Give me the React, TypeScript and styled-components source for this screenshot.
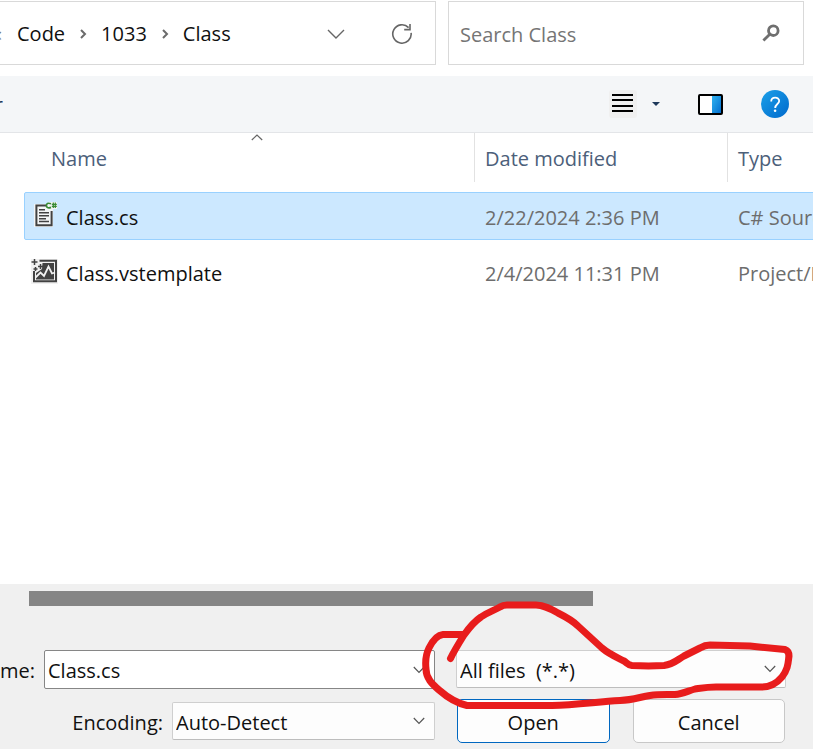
import React from "react";
import styled, { createGlobalStyle } from "styled-components";

const GlobalStyle = createGlobalStyle`
  * { box-sizing: border-box; }
  body { margin: 0; background: #fff; }
  body, button, input, select {
    font-family: "Open Sans", "Noto Sans", sans-serif;
    font-size: 20px;
    line-height: 28px;
    color: #101010;
  }
`;

const Dialog = styled.main`
  display: flex;
  flex-direction: column;
  min-height: 100vh;
  overflow: hidden;
`;

const TopBar = styled.header`
  display: grid;
  grid-template-columns: minmax(0, 436fr) minmax(0, 356fr);
  gap: 12px;
  padding: 1px 9px 11px 0;
`;

const AddressBar = styled.nav`
  display: flex;
  align-items: center;
  height: 64px;
  border: 1px solid #d9d9d9;
  border-left: 0;
  padding: 2px 21px 0 0;
`;

const Crumbs = styled.ol`
  display: flex;
  align-items: center;
  flex: 1;
  list-style: none;
  margin: 0;
  padding: 0;
`;

const Crumb = styled.li`
  display: flex;
  align-items: center;
`;

const CrumbLink = styled.a`
  color: inherit;
  text-decoration: none;
`;

const CrumbChevron = styled.svg`
  width: 8px;
  height: 10px;
  margin: 0 14px;
`;

const Overflow = styled.button`
  display: flex;
  justify-content: flex-end;
  width: 2px;
  margin: 0 15px 0 0;
  padding: 0;
  overflow: hidden;
  border: 0;
  background: none;
  color: #777;
`;

const IconButton = styled.button`
  display: flex;
  align-items: center;
  justify-content: center;
  width: 24px;
  height: 28px;
  padding: 0;
  border: 0;
  background: none;
`;

const AddressActions = styled.div`
  display: flex;
  gap: 42px;
`;

const SearchBox = styled.form`
  display: flex;
  align-items: center;
  height: 64px;
  border: 1px solid #d9d9d9;
  padding: 0 20px 0 11px;
`;

const SearchInput = styled.input`
  flex: 1;
  min-width: 0;
  padding: 4px 0 0;
  border: 0;
  outline: 0;
  background: none;
  &::placeholder { color: #757575; opacity: 1; }
`;

const Toolbar = styled.div`
  display: flex;
  align-items: center;
  justify-content: space-between;
  height: 57px;
  padding-right: 24px;
  background: #f4f6f8;
  border-bottom: 1px solid #e3e5e8;
`;

const FolderButton = styled.button`
  display: flex;
  justify-content: flex-end;
  width: 3px;
  padding: 2px 0 0;
  border: 0;
  overflow: hidden;
  background: none;
  color: #1e395b;
`;

const ToolGroup = styled.div`
  display: flex;
  align-items: center;
`;

const ToolButton = styled.button<{ $width: number; $after: number }>`
  display: flex;
  align-items: center;
  justify-content: center;
  width: ${(p) => p.$width}px;
  height: 28px;
  margin-right: ${(p) => p.$after}px;
  padding: 0;
  border: 0;
  border-radius: 3px;
  background: none;
`;

const FileTable = styled.table`
  display: flex;
  flex: 1;
  flex-direction: column;
  min-height: 200px;
  padding-left: 24px;
`;

const TableHead = styled.thead`
  display: block;
`;

const HeadRow = styled.tr`
  display: grid;
  grid-template-columns: 451px 253px minmax(109px, 1fr);
  height: 49px;
  margin-right: -24px;
`;

const HeadCell = styled.th<{ $first?: boolean }>`
  position: relative;
  padding: ${(p) => (p.$first ? "12px 0 0 11px" : "12px 0 0 10px")};
  margin-left: ${(p) => (p.$first ? 16 : 0)}px;
  border-right: 1px solid #e2e2e2;
  font-weight: 400;
  text-align: left;
  color: #4c607a;
  &:last-child { border-right: 0; }
`;

const SortCaret = styled.svg`
  position: absolute;
  top: 1px;
  left: 50%;
  width: 12px;
  height: 7px;
  margin-left: -6px;
`;

const TableBody = styled.tbody`
  display: flex;
  flex-direction: column;
  gap: 8px;
  padding-top: 10px;
`;

const FileRow = styled.tr<{ $selected?: boolean }>`
  display: grid;
  grid-template-columns: 450px 253px minmax(109px, 1fr);
  align-items: center;
  height: 48px;
  margin-right: -24px;
  border: 1px solid ${(p) => (p.$selected ? "#99d1ff" : "transparent")};
  border-radius: 2px;
  background: ${(p) => (p.$selected ? "#cce8ff" : "transparent")};
`;

const NameCell = styled.td`
  display: flex;
  align-items: center;
  gap: 8px;
  padding: 4px 0 0 6px;
`;

const FileIcon = styled.svg`
  width: 27px;
  height: 28px;
  margin-top: -8px;
`;

const InfoCell = styled.td`
  padding: 4px 0 0 10px;
  color: #6d6d6d;
  white-space: nowrap;
`;

const Footer = styled.footer`
  padding: 7px 27px 6px 0;
  background: #f0f0f0;
`;

const ScrollTrack = styled.div`
  padding: 0 193px 0 29px;
`;

const ScrollThumb = styled.div`
  height: 15px;
  background: #858585;
`;

const Fields = styled.form`
  display: flex;
  gap: 21px;
  margin-top: 44px;
`;

const LeftFields = styled.div`
  display: flex;
  flex: 1;
  flex-direction: column;
  gap: 13px;
`;

const RightFields = styled.div`
  position: relative;
  display: flex;
  flex-direction: column;
  gap: 11px;
  width: 330px;
`;

const Field = styled.div<{ $label: number }>`
  display: grid;
  grid-template-columns: ${(p) => p.$label}px minmax(0, 1fr);
  column-gap: 9px;
  align-items: center;
`;

const FieldLabel = styled.label`
  padding-top: 3px;
  text-align: right;
  white-space: nowrap;
`;

const Combo = styled.div`
  display: grid;
  align-items: center;
  > * { grid-area: 1 / 1; }
`;

const NameInput = styled.input`
  width: 100%;
  height: 39px;
  padding: 2px 32px 0 3px;
  border: 1px solid #868686;
  border-radius: 2px;
  outline: 0;
  background: #fff;
`;

const Select = styled.select`
  appearance: none;
  width: 100%;
  height: 38px;
  padding: 4px 32px 0 3px;
  border: 1px solid #cfcfcf;
  border-bottom-color: #bdbdbd;
  border-radius: 2px;
  outline: 0;
  background: #fdfdfd;
`;

const ComboChevron = styled.svg`
  justify-self: end;
  width: 12px;
  height: 8px;
  margin-right: 10px;
  pointer-events: none;
`;

const Buttons = styled.div`
  display: grid;
  grid-template-columns: 1fr 1fr;
  gap: 23px;
  padding: 0 1px;
`;

const PushButton = styled.button<{ $primary?: boolean }>`
  height: 44px;
  padding: 3px 0 0;
  border: 1px solid ${(p) => (p.$primary ? "#0067c0" : "#c8c8c8")};
  border-radius: 5px;
  background: #fdfdfd;
`;

const Marker = styled.svg`
  position: absolute;
  top: -52px;
  left: -38px;
  width: 380px;
  height: 112px;
  pointer-events: none;
`;

const Chevron = () => (
  <ComboChevron viewBox="0 0 12 8" fill="none" stroke="#555" strokeWidth="1.2">
    <path d="M.8 1 6 6.4 11.2 1" />
  </ComboChevron>
);

const CsIcon = () => (
  <FileIcon viewBox="0 0 27 28" fill="none">
    <path d="M3 4h14v-2h9v7h-4v18H3z" fill="#f3f5f6" />
    <path d="M15.5 5.4H5.4v19.8h15.2V11" stroke="#424242" strokeWidth="2" />
    <path d="M8 9.8h6M8 12.8h10M8 15.8h10M8 18.8h7M8 21.6h10" stroke="#424242" strokeWidth="1.5" />
    <path d="M20 3.8c-3.2-1.4-4.6.2-4.6 1.8s1.4 3.1 4.6 1.8" stroke="#388a34" strokeWidth="1.7" />
    <path d="M22.3 2.6v5.4M24.3 2.6v5.4M20.8 4.4h5M20.8 6.3h5" stroke="#388a34" strokeWidth="1.2" />
  </FileIcon>
);

const TemplateIcon = () => (
  <FileIcon viewBox="0 0 27 28" fill="none">
    <path d="M0 3h27v25H0z" fill="#f1f1f1" />
    <path d="M8.500 4.800h16.500v20.500H3V15" stroke="#424242" strokeWidth="2" />
    <path d="M11.500 7h11.500v16.500H5V17l6-4z" fill="#424242" />
    <path d="m4.5 21.500 5-5 3.500 3.500L17.500 10.500l3.500 7 3-1" stroke="#f1f1f1" strokeWidth="1.8" />
    <path d="M3.500 3v6M.5 6h6M9.500 8v5M7 10.500h5M4.500 11v4M2.500 13h4" stroke="#424242" strokeWidth="1.500" />
  </FileIcon>
);

const files = [
  { name: "Class.cs", date: "2/22/2024 2:36 PM", type: "C# Source File", icon: <CsIcon />, selected: true },
  { name: "Class.vstemplate", date: "2/4/2024 11:31 PM", type: "Project/Item Template", icon: <TemplateIcon /> },
];

export default function App() {
  return (
    <Dialog>
      <GlobalStyle />
      <TopBar>
        <AddressBar aria-label="Address">
          <Overflow type="button">«</Overflow>
          <Crumbs>
            {["Code", "1033", "Class"].map((name, i) => (
              <Crumb key={name}>
                {i > 0 && (
                  <CrumbChevron viewBox="0 0 8 10" fill="none" stroke="#6b6b6b" strokeWidth="2">
                    <path d="m2 1 4 4-4 4" />
                  </CrumbChevron>
                )}
                <CrumbLink href="#">{name}</CrumbLink>
              </Crumb>
            ))}
          </Crumbs>
          <AddressActions>
            <IconButton type="button" aria-label="Previous locations">
              <svg width="18" height="10" viewBox="0 0 18 10" fill="none" stroke="#666" strokeWidth="1.4">
                <path d="m1 1 8 8 8-8" />
              </svg>
            </IconButton>
            <IconButton type="button" aria-label="Refresh">
              <svg width="22" height="22" viewBox="0 0 22 22" fill="none" stroke="#666" strokeWidth="1.6">
                <path d="M20.1 9.8A9.2 9.2 0 1 1 17.6 4.6" />
                <path d="M19 1v5.6h-5.8" />
              </svg>
            </IconButton>
          </AddressActions>
        </AddressBar>
        <SearchBox>
          <SearchInput type="search" aria-label="Search Class" placeholder="Search Class" />
          <IconButton type="button" aria-label="Search">
            <svg width="18" height="18" viewBox="0 0 18 18" fill="none" stroke="#6f6f6f">
              <circle cx="11.3" cy="6.7" r="4.8" strokeWidth="2.8" />
              <path d="m7.8 10.2-6.4 6.4" strokeWidth="2.8" />
            </svg>
          </IconButton>
        </SearchBox>
      </TopBar>

      <Toolbar>
        <FolderButton type="button">r</FolderButton>
        <ToolGroup>
          <ToolButton type="button" aria-label="Change view" $width={28} $after={14}>
            <svg width="28" height="28" viewBox="0 0 28 28">
              <rect width="28" height="28" rx="3" fill="#f0f0f0" />
              <path d="M3 5h21M3 10h21M3 16h21M3 21h21" stroke="#000" strokeWidth="2" />
            </svg>
          </ToolButton>
          <ToolButton type="button" aria-label="More views" $width={10} $after={37}>
            <svg width="8" height="4" viewBox="0 0 8 4">
              <path d="M0 0h8L4 4z" fill="#1e395b" />
            </svg>
          </ToolButton>
          <ToolButton type="button" aria-label="Preview pane" $width={25} $after={38}>
            <svg width="25" height="21" viewBox="0 0 25 21">
              <defs>
                <linearGradient id="pane" x1="0" y1="0" x2="1" y2="1">
                  <stop stopColor="#32b5f1" />
                  <stop offset="1" stopColor="#0069cc" />
                </linearGradient>
              </defs>
              <rect x="1" y="1" width="23" height="19" rx="1" fill="#fff" />
              <path d="M14 1h10v19H14z" fill="url(#pane)" />
              <rect x="1" y="1" width="23" height="19" rx="1" fill="none" stroke="#000" strokeWidth="2" />
            </svg>
          </ToolButton>
          <ToolButton type="button" aria-label="Help" $width={28} $after={0}>
            <svg width="28" height="28" viewBox="0 0 28 28" fill="none">
              <defs>
                <linearGradient id="help" x1="0" y1="0" x2="1" y2="1">
                  <stop stopColor="#1ba0e8" />
                  <stop offset="1" stopColor="#0069cc" />
                </linearGradient>
              </defs>
              <circle cx="14" cy="14" r="14" fill="url(#help)" />
              <path d="M10.2 11.4c0-5 8-4.8 8-.4 0 3-4 3.2-4 7" stroke="#fff" strokeWidth="1.8" />
              <circle cx="14.1" cy="20.8" r="1.3" fill="#fff" />
            </svg>
          </ToolButton>
        </ToolGroup>
      </Toolbar>

      <FileTable>
        <TableHead>
          <HeadRow>
            <HeadCell scope="col" aria-sort="ascending" $first>
              Name
              <SortCaret viewBox="0 0 12 7" fill="none" stroke="#666" strokeWidth="1.2">
                <path d="m.8 6 5.2-5 5.2 5" />
              </SortCaret>
            </HeadCell>
            <HeadCell scope="col">Date modified</HeadCell>
            <HeadCell scope="col">Type</HeadCell>
          </HeadRow>
        </TableHead>
        <TableBody>
          {files.map((file) => (
            <FileRow key={file.name} $selected={file.selected}>
              <NameCell>
                {file.icon}
                {file.name}
              </NameCell>
              <InfoCell>{file.date}</InfoCell>
              <InfoCell>{file.type}</InfoCell>
            </FileRow>
          ))}
        </TableBody>
      </FileTable>

      <Footer>
        <ScrollTrack>
          <ScrollThumb />
        </ScrollTrack>
        <Fields>
          <LeftFields>
            <Field $label={35}>
              <FieldLabel htmlFor="file-name">me:</FieldLabel>
              <Combo>
                <NameInput id="file-name" type="text" defaultValue="Class.cs" />
                <Chevron />
              </Combo>
            </Field>
            <Field $label={163}>
              <FieldLabel htmlFor="encoding">Encoding:</FieldLabel>
              <Combo>
                <Select id="encoding">
                  <option>Auto-Detect</option>
                </Select>
                <Chevron />
              </Combo>
            </Field>
          </LeftFields>
          <RightFields>
            <Combo>
              <Select aria-label="File type">
                <option>{"All files\u00a0 (*.*)"}</option>
              </Select>
              <Chevron />
            </Combo>
            <Buttons>
              <PushButton type="button" $primary>Open</PushButton>
              <PushButton type="button">Cancel</PushButton>
            </Buttons>
            <Marker
              viewBox="418 598 380 112"
              fill="none"
              stroke="#e81c1c"
              strokeWidth="7"
              strokeLinecap="round"
              strokeLinejoin="round"
            >
              <path d="M450.500 658.500C454 651 459 643 464 635C469 628 475 621 481 617C488 612 493 611 500 607Q503 605 507 605H536C544 605 551 609 558 613C568 618 573 621 578 626L602 648C609 654 616 657 624 661C627 663 628 665 632 665.500C642 666 655 666 664 665.500C673 664.500 677 660 684 656L700 648Q705 645 710 645L750 646L785 649.500Q789 651 789 656C788 664 788 669 782 677C777 683 770 687 762 687H716C707 687 702 688 695 689C688 691 682 694 675 694.500C667 694.500 659 694 650 695.500C640 697 633 700 620 700.500C596 702 575 705 552 705.500H467C456 703 447 697 439 690C432 684 426 678 426 669C425 660 426 654 429 648C433 640 437 635 443 634.500H463" />
            </Marker>
          </RightFields>
        </Fields>
      </Footer>
    </Dialog>
  );
}
